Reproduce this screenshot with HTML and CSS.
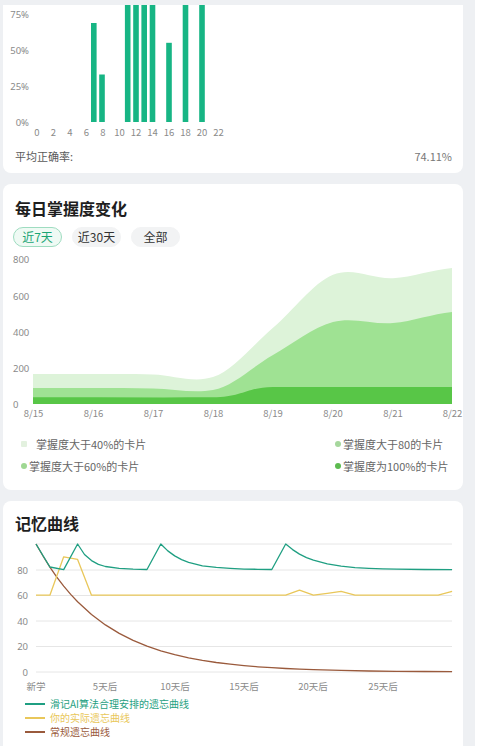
FILE: index.html
```html
<!DOCTYPE html>
<html lang="zh-CN">
<head>
<meta charset="utf-8">
<title>学习统计</title>
<link rel="stylesheet" href="styles.css">
</head>
<body>
<div class="page">
  <section class="card card-accuracy">
    <svg class="chart" width="460" height="141" viewBox="3 5 460 141">
      <g class="axis-r">
        <text x="29" y="17.5">75%</text>
        <text x="29" y="53.5">50%</text>
        <text x="29" y="89.5">25%</text>
        <text x="29" y="125.5">0%</text>
      </g>
      <g class="bars">
        <rect x="91.0" y="23" width="5.6" height="99"/>
        <rect x="99.2" y="74.5" width="5.6" height="47.5"/>
        <rect x="124.9" y="-30" width="5.6" height="152"/>
        <rect x="133.2" y="-30" width="5.6" height="152"/>
        <rect x="141.4" y="-30" width="5.6" height="152"/>
        <rect x="149.7" y="-30" width="5.6" height="152"/>
        <rect x="166.2" y="42.8" width="5.6" height="79.2"/>
        <rect x="182.7" y="-30" width="5.6" height="152"/>
        <rect x="199.2" y="-30" width="5.6" height="152"/>
      </g>
      <g class="axis-m">
        <text x="37" y="135.5">0</text>
        <text x="53.5" y="135.5">2</text>
        <text x="70" y="135.5">4</text>
        <text x="86.5" y="135.5">6</text>
        <text x="103" y="135.5">8</text>
        <text x="119.5" y="135.5">10</text>
        <text x="136" y="135.5">12</text>
        <text x="152.5" y="135.5">14</text>
        <text x="169" y="135.5">16</text>
        <text x="185.5" y="135.5">18</text>
        <text x="202" y="135.5">20</text>
        <text x="218.5" y="135.5">22</text>
      </g>
    </svg>
    <div class="acc-footer">
      <span>平均正确率:</span>
      <span>74.11%</span>
    </div>
  </section>

  <section class="card card-mastery">
    <h2 class="title">每日掌握度变化</h2>
    <div class="tabs">
      <span class="tab tab-active">近7天</span>
      <span class="tab">近30天</span>
      <span class="tab">全部</span>
    </div>
    <svg class="chart chart-area" width="460" height="172" viewBox="3 250 460 172">
      <path class="area-light" d="M33,404 L33,374.05 C53,374.05 73,373.99 93,374.05 C113,374.11 133,373.89 153,374.4 C173,374.91 193,383.5 213,377.1 C233,370.7 253,344.85 273,327.8 C293,310.75 313,283.07 333,274.8 C353,266.53 373,279.35 393,278.2 C412.7,277.05 432.3,269.62 452,267.9 L452,404 Z"/>
      <path class="area-mid" d="M33,404 L33,388 C53,388 73,387.93 93,388 C113,388.07 133,388.07 153,388.4 C173,388.73 193,393.5 213,390 C233,386.5 253,366.33 273,355 C293,343.67 313,327.32 333,322 C353,316.68 373,324.77 393,323.1 C412.7,321.43 432.3,313.85 452,312 L452,404 Z"/>
      <path class="area-dark" d="M33,404 L33,397.2 C93,397.2 153,397.6 213,397.3 C243,397 248,386.9 273,386.9 L452,386.9 L452,404 Z"/>
      <g class="axis-l">
        <text x="13" y="262.5">800</text>
        <text x="13" y="299.5">600</text>
        <text x="13" y="335.5">400</text>
        <text x="13" y="371.5">200</text>
        <text x="13" y="407.5">0</text>
      </g>
      <g class="axis-m">
        <text x="33.5" y="416.5">8/15</text>
        <text x="93.5" y="416.5">8/16</text>
        <text x="153.5" y="416.5">8/17</text>
        <text x="213.5" y="416.5">8/18</text>
        <text x="273" y="416.5">8/19</text>
        <text x="333" y="416.5">8/20</text>
        <text x="393" y="416.5">8/21</text>
        <text x="452.5" y="416.5">8/22</text>
      </g>
    </svg>
    <div class="legend2">
      <div class="lg-item lg-wide"><span class="mk mk-square mk-light"></span>掌握度大于40%的卡片</div>
      <div class="lg-item"><span class="mk mk-dot mk-80"></span>掌握度大于80的卡片</div>
      <div class="lg-item"><span class="mk mk-dot mk-60"></span>掌握度大于60%的卡片</div>
      <div class="lg-item"><span class="mk mk-dot mk-100"></span>掌握度为100%的卡片</div>
    </div>
  </section>

  <section class="card card-memory">
    <h2 class="title">记忆曲线</h2>
    <svg class="chart" width="460" height="156" viewBox="3 536 460 156">
      <g class="grid">
        <line x1="36" y1="544" x2="452" y2="544"/>
        <line x1="36" y1="570" x2="452" y2="570"/>
        <line x1="36" y1="595.5" x2="452" y2="595.5"/>
        <line x1="36" y1="621" x2="452" y2="621"/>
        <line x1="36" y1="646.5" x2="452" y2="646.5"/>
        <line x1="36" y1="672" x2="452" y2="672"/>
      </g>
      <g class="axis-r">
        <text x="28" y="573.5">80</text>
        <text x="28" y="599">60</text>
        <text x="28" y="624.5">40</text>
        <text x="28" y="650">20</text>
        <text x="28" y="675.5">0</text>
      </g>
      <g class="axis-m">
        <text x="36" y="689.5">新学</text>
        <text x="105" y="689.5">5天后</text>
        <text x="175" y="689.5">10天后</text>
        <text x="244" y="689.5">15天后</text>
        <text x="313" y="689.5">20天后</text>
        <text x="383" y="689.5">25天后</text>
      </g>
      <path class="ln ln-brown" d="M36,544 L43,556 L49.9,567.2 L56.8,577.1 L63.7,586.2 L70.7,594.4 L77.6,601.8 L91.5,614.5 L105.4,624.9 L119.2,633.4 L133.1,640.4 L147,646.2 L160.8,650.8 L174.7,654.7 L188.6,657.8 L202.4,660.4 L216.3,662.5 L230.2,664.2 L244,665.6 L257.9,666.8 L271.8,667.7 L285.7,668.5 L299.5,669.1 L313.4,669.7 L341.1,670.4 L368.9,671 L396.6,671.3 L424.4,671.5 L452.1,671.7"/>
      <path class="ln ln-yellow" d="M36,595.2 L49.9,595.2 L63.7,556.8 L77.6,559.4 L91.5,595.2 L285.7,595.2 L299.5,590.1 L313.4,595.2 L327.3,593.3 L341.1,591.4 L355,595.2 L438.2,595.2 L452.1,591.4"/>
      <path class="ln ln-green" d="M36,544 L49.9,567 L63.7,569.6 L77.6,544 L84.5,554.5 L91.5,560.6 L98.4,564.4 L105.4,566.5 L119.2,568.4 L133.1,569.2 L147,569.5 L160.8,544 L167.8,550.9 L174.7,555.9 L181.6,559.6 L188.6,562.3 L202.4,565.8 L216.3,567.4 L230.2,568.4 L244,569.1 L257.9,569.3 L271.8,569.5 L285.7,544 L292.6,549.6 L299.5,554.1 L306.5,557.6 L313.4,560.1 L327.3,563.8 L341.1,566.1 L355,567.6 L368.9,568.3 L382.8,568.8 L396.6,569.1 L424.4,569.5 L452.1,569.6"/>
    </svg>
    <div class="legend3">
      <div class="l3-item l3-green"><span class="l3-line"></span>滑记AI算法合理安排的遗忘曲线</div>
      <div class="l3-item l3-yellow"><span class="l3-line"></span>你的实际遗忘曲线</div>
      <div class="l3-item l3-brown"><span class="l3-line"></span>常规遗忘曲线</div>
    </div>
  </section>
</div>
</body>
</html>
```

FILE: styles.css
```css
html, body {
  margin: 0;
  padding: 0;
  overflow: hidden;
  background: #ffffff;
}

body {
  font-family: "Noto Sans CJK SC", "Noto Sans", sans-serif;
  color: #333;
}

.page {
  width: 460px;
  min-height: 746px;
  padding: 5px 12px 0 3px;
  background: #eef0f3;
  display: flex;
  flex-direction: column;
  gap: 11px;
}

.card {
  background: #ffffff;
  border-radius: 8px;
  width: 460px;
}

.card-accuracy {
  border-radius: 0 0 8px 8px;
}

.chart {
  display: block;
}

.axis-r text,
.axis-l text,
.axis-m text {
  font-family: "Noto Sans", "Noto Sans CJK SC", sans-serif;
  font-size: 9.5px;
  fill: #8a8a8a;
}

.axis-m text {
  font-family: "Noto Sans CJK SC", "Noto Sans", sans-serif;
}

.axis-r text { text-anchor: end; }
.axis-l text { text-anchor: start; }
.axis-m text { text-anchor: middle; }

.bars rect {
  fill: #17b584;
}

.acc-footer {
  display: flex;
  justify-content: space-between;
  padding: 2px 11px 9px 12px;
  font-size: 11px;
  line-height: 16px;
  color: #5a5a5a;
}

.acc-footer span:last-child {
  color: #777;
}

.title {
  margin: 0 0 0 12px;
  font-size: 16px;
  line-height: 20px;
  font-weight: 700;
  color: #1e1e1e;
}

.card-mastery {
  padding-top: 14px;
}

.tabs {
  display: flex;
  gap: 10px;
  margin-top: 9px;
  padding-left: 10px;
}

.tab {
  box-sizing: border-box;
  width: 49px;
  height: 20px;
  border-radius: 10px;
  background: #f2f3f4;
  border: 1px solid #f2f3f4;
  font-size: 12px;
  line-height: 18px;
  text-align: center;
  color: #333;
}

.tab-active {
  background: #effaf4;
  border-color: #9edcc0;
  color: #1aa574;
}

.chart-area {
  margin-top: 3px;
}

.area-light { fill: #ddf3d9; }
.area-mid { fill: #9fe293; }
.area-dark { fill: #58c647; }

.legend2 {
  display: grid;
  grid-template-columns: 314px auto;
  row-gap: 6px;
  padding: 14px 0 16px 18px;
}

.lg-item {
  display: flex;
  align-items: center;
  gap: 2px;
  font-size: 11px;
  line-height: 16px;
  color: #666;
  white-space: nowrap;
}

.lg-wide {
  gap: 9px;
}

.mk {
  display: inline-block;
  width: 6px;
  height: 6px;
  flex: none;
}

.mk-dot { border-radius: 50%; }
.mk-square { border-radius: 1px; }
.mk-light { background: #e3f1df; }
.mk-60 { background: #9fd893; }
.mk-80 { background: #a6d79d; }
.mk-100 { background: #5dbb50; }

.card-memory {
  padding-top: 12px;
  padding-bottom: 20px;
}

.card-memory .chart {
  margin-top: 3px;
}

.grid line {
  stroke: #e6e6e6;
  stroke-width: 1;
}

.ln {
  fill: none;
  stroke-width: 1.3;
  stroke-linejoin: round;
}

.ln-green { stroke: #1f9f82; }
.ln-yellow { stroke: #e9c75a; }
.ln-brown { stroke: #9a5a3c; }

.legend3 {
  padding: 5px 0 0 22px;
}

.l3-item {
  display: flex;
  align-items: center;
  gap: 5px;
  font-size: 10px;
  line-height: 14px;
}

.l3-line {
  display: inline-block;
  width: 20px;
  height: 1.5px;
  flex: none;
}

.l3-green { color: #1f9f82; }
.l3-green .l3-line { background: #1f9f82; }
.l3-yellow { color: #e9c75a; }
.l3-yellow .l3-line { background: #e9c75a; }
.l3-brown { color: #9a5a3c; }
.l3-brown .l3-line { background: #9a5a3c; }
```
